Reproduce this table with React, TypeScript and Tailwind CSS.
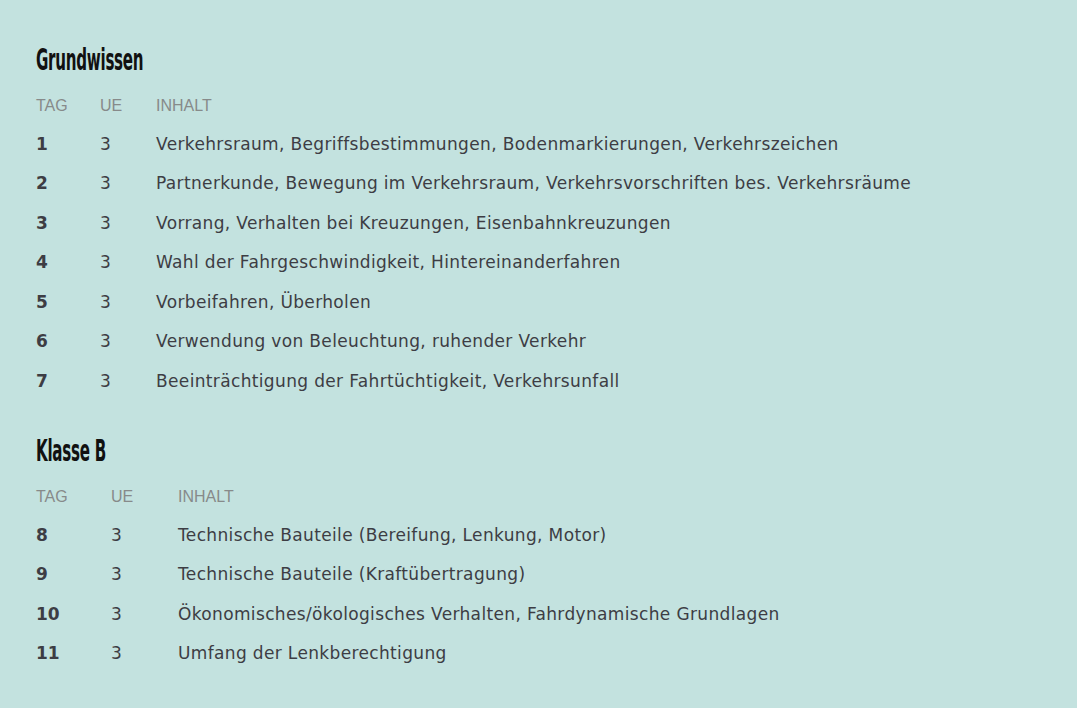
const grundwissen = [
  ['1', '3', 'Verkehrsraum, Begriffsbestimmungen, Bodenmarkierungen, Verkehrszeichen'],
  ['2', '3', 'Partnerkunde, Bewegung im Verkehrsraum, Verkehrsvorschriften bes. Verkehrsräume'],
  ['3', '3', 'Vorrang, Verhalten bei Kreuzungen, Eisenbahnkreuzungen'],
  ['4', '3', 'Wahl der Fahrgeschwindigkeit, Hintereinanderfahren'],
  ['5', '3', 'Vorbeifahren, Überholen'],
  ['6', '3', 'Verwendung von Beleuchtung, ruhender Verkehr'],
  ['7', '3', 'Beeinträchtigung der Fahrtüchtigkeit, Verkehrsunfall'],
];

const klasseB = [
  ['8', '3', 'Technische Bauteile (Bereifung, Lenkung, Motor)'],
  ['9', '3', 'Technische Bauteile (Kraftübertragung)'],
  ['10', '3', 'Ökonomisches/ökologisches Verhalten, Fahrdynamische Grundlagen'],
  ['11', '3', 'Umfang der Lenkberechtigung'],
];

function Section({
  title,
  rows,
  cols,
}: {
  title: string;
  rows: string[][];
  cols: string;
}) {
  return (
    <section>
      <h2 className="font-['DejaVu_Sans_Condensed',sans-serif] font-bold text-[30px] leading-8 text-[#111] tracking-[-0.5px] origin-left scale-x-[0.56] inline-block">
        {title}
      </h2>
      <div className={`grid ${cols} mt-[20px] font-['DejaVu_Sans',sans-serif]`}>
        <div className="font-['Liberation_Sans',sans-serif] text-[16px] leading-5 text-[#878a8a] h-[37.5px]">TAG</div>
        <div className="font-['Liberation_Sans',sans-serif] text-[16px] leading-5 text-[#878a8a]">UE</div>
        <div className="font-['Liberation_Sans',sans-serif] text-[16px] leading-5 text-[#878a8a]">INHALT</div>
        {rows.map((r) => (
          <div key={r[0]} className="contents">
            <div className="text-[17px] leading-5 h-[39.5px] font-bold text-[#3d3d44]">{r[0]}</div>
            <div className="text-[17px] leading-5 text-[#3d3d44]">{r[1]}</div>
            <div className="text-[17px] leading-5 tracking-[0.35px] text-[#3d3d44]">{r[2]}</div>
          </div>
        ))}
      </div>
    </section>
  );
}

export default function App() {
  return (
    <div className="min-h-screen bg-[#c3e2df] px-9 pt-[44px]">
      <Section title="Grundwissen" rows={grundwissen} cols="grid-cols-[64px_56px_1fr]" />
      <div className="mt-[25px]">
        <Section title="Klasse B" rows={klasseB} cols="grid-cols-[75px_67px_1fr]" />
      </div>
    </div>
  );
}
